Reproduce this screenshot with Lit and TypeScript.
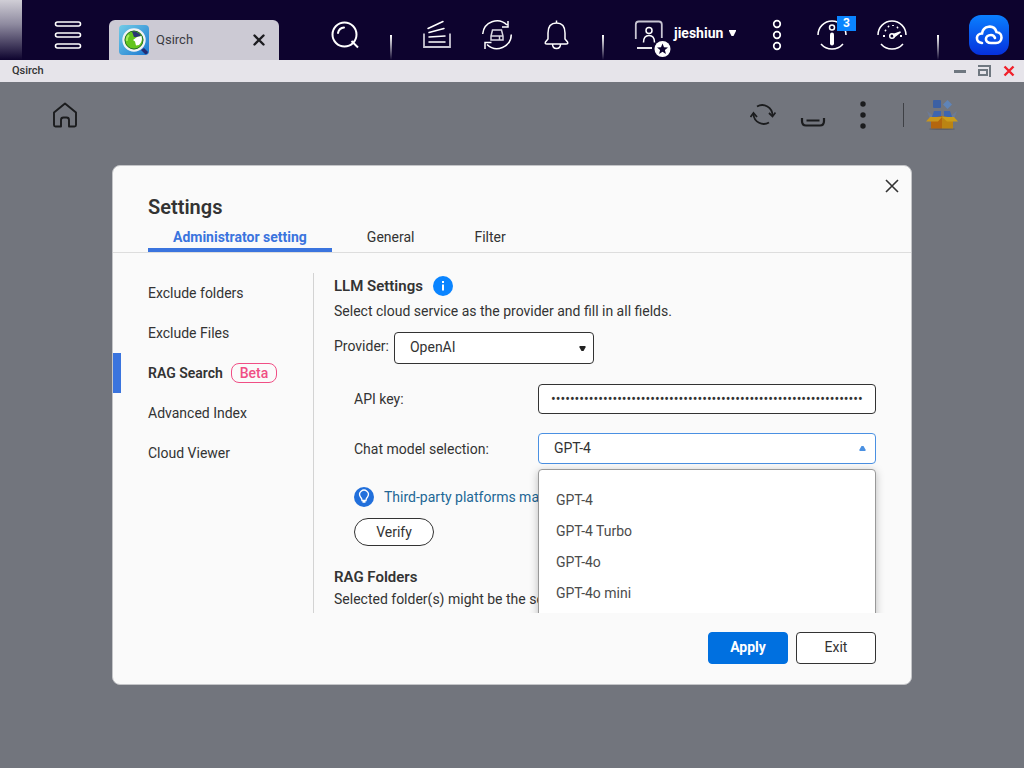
import { LitElement, html, css } from "lit";
import { customElement, state } from "lit/decorators.js";
import { classMap } from "lit/directives/class-map.js";

const reset = css`
  *, :host { box-sizing: border-box; }
  :host { font-family: Roboto, "Liberation Sans", sans-serif; font-size: 14px; line-height: 20px; color: #333; }
  button { font: inherit; color: inherit; background: none; border: 0; padding: 0; margin: 0; cursor: pointer; }
  svg { display: block; flex: none; }
`;

@customElement("desktop-bar")
class DesktopBar extends LitElement {
  static styles = [reset, css`
    :host { display: flex; height: 60px; background: #0d032e; color: #fff; }
    .edge { width: 22px; background: linear-gradient(#d0ced6, #8f8ba0 40%, #0d032e); }
    .menu { width: 87px; padding: 10px 0 0 4px; display: grid; place-items: center; }
    .tab { display: flex; align-items: center; width: 170px; height: 40px; margin-top: 20px; padding: 0 14px 0 10px; background: #cccad4; border-radius: 6px 6px 0 0; color: #3a3a42; }
    .tab span { flex: 1; padding-left: 7px; font-size: 13px; }
    .tools { display: flex; margin-left: auto; }
    .tool { width: 60px; padding-top: 10px; display: grid; place-items: center; position: relative; }
    .more { width: 50px; }
    .cloud { width: 70px; }
    .sep { width: 32px; display: flex; justify-content: center; padding-top: 35px; }
    .sep::before { content: ""; width: 2px; height: 25px; background: linear-gradient(#fff, #0d032e); }
    .user { width: 133px; display: flex; align-items: center; padding: 8px 0 0 15px; font-weight: 700; }
    .name { display: flex; align-items: center; gap: 6px; padding-bottom: 2px; }
    .count { position: absolute; top: 16px; right: 6px; width: 19px; height: 15px; background: #0a84ff; font-size: 12px; line-height: 15px; font-weight: 700; text-align: center; }
  `];

  render() {
    return html`
      <div class="edge"></div>
      <button class="menu" aria-label="Main menu">
        <svg width="28" height="28" fill="none" stroke="#fff" stroke-width="1.6"><rect x="1.500" y="1" width="25" height="4" rx="2"/><rect x="1.500" y="12" width="25" height="4" rx="2"/><rect x="1.500" y="23" width="25" height="4" rx="2"/></svg>
      </button>
      <div class="tab">
        <svg width="30" height="30">
          <defs><linearGradient id="sky" x1="0" y1="0" x2="1" y2="1"><stop stop-color="#72cce6"/><stop offset="1" stop-color="#1a78d2"/></linearGradient></defs>
          <rect width="30" height="30" rx="4" fill="url(#sky)"/>
          <path d="M22 25l3-2 4 4q-1 3-3 2z" fill="#252b70"/>
          <circle cx="15" cy="15" r="10.5" fill="#63c51d" stroke="#f2f2f4" stroke-width="2.4"/>
          <circle cx="15" cy="15" r="9" fill="none" stroke="#28702d" stroke-width="1"/>
          <path d="M15 12L13 6.500a9 9 0 0 1 9 4.500l-4 1z" fill="#2b3474"/>
          <path d="M14 15l4-3 4.500-1a9 9 0 0 1-2.500 9l-3 .5-1-4z" fill="#fff"/>
          <path d="M10 10q-3 3-2 6" stroke="#a4ea57" stroke-width="2" fill="none"/>
        </svg>
        <span>Qsirch</span>
        <button aria-label="Close Qsirch"><svg width="12" height="12" stroke="#1c1c20" stroke-width="2.4" stroke-linecap="round"><path d="M1.500 1.500l9 9m0-9l-9 9"/></svg></button>
      </div>
      <div class="tools">
        <button class="tool" aria-label="Search"><svg width="30" height="30" fill="none" stroke="#fff" stroke-width="2"><circle cx="14.500" cy="14.500" r="12"/><path d="M21.500 21l6.500 6.500"/><path d="M8 13q1-5 6-5.500" stroke-linecap="round"/></svg></button>
        <div class="sep"></div>
        <button class="tool" aria-label="Volumes"><svg width="30" height="30" fill="none" stroke="#fff" stroke-width="1.5"><path d="M2 13.500v13.500h26V13.500" stroke="#c8c5d2" stroke-width="1.800"/><path d="M7 22h16M7 17l16-1M7 12.500l15-4M6 8.500l15-7" stroke-linecap="round"/></svg></button>
        <button class="tool" aria-label="Devices"><svg width="32" height="32" fill="none" stroke="#fff" stroke-width="1.5"><path d="M1.700 15A14.300 14.300 0 0 1 26 6m1-4v6h-6M30.300 15.500A14.300 14.300 0 0 1 6 25.500M4 30v-6.500h6.500"/><path d="M11.500 11h9l1.500 6v4h-12v-4zM10 17h12M18.500 17v4" stroke="#d9d7e2"/></svg></button>
        <button class="tool" aria-label="Notifications"><svg width="28" height="32" fill="none" stroke="#fff" stroke-width="1.500"><path d="M13.500 1.500v2M5 14q0-10 8.500-10T22 14v6l2.500 3q1 2-1.500 2H4q-2.500 0-1.500-2L5 20zM9.500 25q0 4.500 4 4.500t4-4.500"/></svg></button>
        <div class="sep"></div>
        <button class="user">
          <svg width="40" height="46" viewBox="0 -7 40 46" fill="none" stroke="#fff" stroke-width="1.500"><path d="M1.800 21V6.500q0-3 3-3h20q3 0 3 3V20" stroke="#c8c5d2" stroke-width="1.800"/><circle cx="15" cy="12.500" r="3"/><path d="M9.500 24.500q0-7 5.500-7t5.500 7"/><path d="M3 30h15" stroke-width="1.800"/><circle cx="28.500" cy="31" r="8" fill="#fff" stroke="none"/><path d="M28.500 25.500l1.500 3.800 4 .2-3.100 2.600 1 3.900-3.400-2.200-3.400 2.200 1-3.900-3.100-2.600 4-.2z" fill="#0d032e" stroke="none"/></svg>
          <span class="name">jieshiun<svg width="7" height="6"><path d="M0 0h7v1L4.500 6h-2L0 1z" fill="#fff"/></svg></span>
        </button>
        <button class="tool more" aria-label="More"><svg width="10" height="32" fill="none" stroke="#fff" stroke-width="1.700"><circle cx="5" cy="5" r="3.300"/><circle cx="5" cy="16" r="3.300"/><circle cx="5" cy="27" r="3.300"/></svg></button>
        <button class="tool" aria-label="Information"><svg width="32" height="32" fill="none" stroke="#fff" stroke-width="1.500"><path d="M2 16A14 14 0 1 1 30 16M5 25a14.500 14.500 0 0 0 22 0"/><circle cx="16" cy="8.500" r="2.500"/><path d="M16 15.500v9" stroke-width="4" stroke-linecap="round"/></svg><span class="count">3</span></button>
        <button class="tool" aria-label="Dashboard"><svg width="32" height="32" fill="none" stroke="#fff" stroke-width="1.500"><path d="M2 16A14 14 0 1 1 30 16M5 25a14.500 14.500 0 0 0 22 0"/><path d="M7 17h2m0-6l1 1m2-5l1 1m4-2v1m5 1l-1 1m3 8h2" stroke-width="1.800"/><circle cx="16" cy="17" r="2.300"/><path d="M17.500 15.500l7-2.500-6 4.500z" fill="#fff"/></svg></button>
        <div class="sep"></div>
        <button class="tool cloud" aria-label="myQNAPcloud"><svg width="40" height="40">
          <defs><linearGradient id="deep" x1="0" y1="0" x2="0" y2="1"><stop stop-color="#0a80ff"/><stop offset="1" stop-color="#0630dc"/></linearGradient></defs>
          <rect width="40" height="40" rx="12" fill="url(#deep)"/>
          <path d="M13 28C6 27 6.500 18.500 13 18.500C14 10.500 25 9 27.500 17C34.500 17.500 34 28 27 28h-5c-7 0-6.500-8 0-8q3 0 4 3" fill="none" stroke="#fff" stroke-width="2.600" stroke-linecap="round"/></svg></button>
      </div>`;
  }
}

@customElement("window-title")
class WindowTitle extends LitElement {
  static styles = [reset, css`
    :host { display: flex; align-items: center; gap: 12px; height: 22px; padding: 0 9px 0 12px; background: #e6e4ea; font-size: 11px; }
    .title { flex: 1; font-weight: 500; }
  `];
  render() {
    return html`
      <span class="title">Qsirch</span>
      <button aria-label="Minimize"><svg width="12" height="12"><path d="M0 5h12v3H0z" fill="#6f7780"/></svg></button>
      <button aria-label="Restore"><svg width="13" height="12" fill="none" stroke="#6f7780" stroke-width="2"><path d="M0 1h12v11"/><rect x="1" y="5" width="8" height="5"/></svg></button>
      <button aria-label="Close"><svg width="12" height="12"><path d="M1.500 1.500l9 9m0-9l-9 9" stroke="#f0202a" stroke-width="2.400"/></svg></button>`;
  }
}

@customElement("app-toolbar")
class AppToolbar extends LitElement {
  static styles = [reset, css`
    :host { display: flex; align-items: center; height: 66px; padding: 0 58px 0 40px; }
    button { display: grid; place-items: center; width: 50px; height: 50px; }
    .home { margin-right: auto; }
    .sep { width: 30px; height: 24px; display: flex; justify-content: center; }
    .sep::before { content: ""; width: 1px; background: #3e4045; }
    .apps { width: 48px; }
  `];
  render() {
    return html`
      <button class="home" aria-label="Home"><svg width="26" height="28" fill="none" stroke="#1b1c1e" stroke-width="1.900" stroke-linejoin="round"><path d="M2 11.500l11-9 11 9V24q0 1.500-1.500 1.500H17V19q0-2.500-2.500-2.500h-3Q9 16.500 9 19v6.500H3.500Q2 25.500 2 24z"/></svg></button>
      <button aria-label="Refresh"><svg width="26" height="24" fill="none" stroke="#1b1c1e" stroke-width="1.800"><path d="M7 3.500A10.300 10.300 0 0 1 22.500 12.500M19 19.500A10.300 10.300 0 0 1 3.500 11.500"/><path d="M19 10l3.500 3.500L25.500 9.500M.5 14l3-4 3.500 4"/></svg></button>
      <button aria-label="Tasks"><svg width="26" height="24" fill="none" stroke="#1b1c1e" stroke-width="2.200"><path d="M2 15v3q0 4.500 4 4.500h14q4 0 4-4.500v-3M6.500 17.500h13"/></svg></button>
      <button aria-label="More options"><svg width="8" height="28" fill="#1b1c1e"><circle cx="4" cy="3" r="2.700"/><circle cx="4" cy="14" r="2.700"/><circle cx="4" cy="25" r="2.700"/></svg></button>
      <div class="sep"></div>
      <button class="apps" aria-label="Extensions"><svg width="32" height="30">
        <path d="M1 11l5 4v4H4zM31 11l-5 4v4h2z" fill="#6d7b96"/>
        <rect x="7" y="0" width="8" height="8" rx="1" fill="#3c60a4"/><path d="M21.500 0l4.500 4.500-4.500 4.500L17 4.500z" fill="#5f84b8"/>
        <path d="M8 11h7v6H6zM18 11h6l2 6h-8z" fill="#3d65b0"/>
        <ellipse cx="16" cy="29" rx="13" ry="1" fill="#5f6067"/>
        <path d="M5 18l11-2v12.500H5z" fill="#b4660f"/><path d="M16 16l11 2v10.500H16z" fill="#bb8413"/>
        <path d="M4 17h12l-4 4.500H0z" fill="#c7961d"/><path d="M16 17h12l4 4.500H21z" fill="#c99c1c"/>
      </svg></button>`;
  }
}

@customElement("settings-dialog")
class SettingsDialog extends LitElement {
  @state() private open = true;
  @state() private model = "GPT-4";

  private sections = ["Exclude folders", "Exclude Files", "RAG Search", "Advanced Index", "Cloud Viewer"];
  private models = ["GPT-4", "GPT-4 Turbo", "GPT-4o", "GPT-4o mini"];

  static styles = [reset, css`
    :host { display: block; width: min(800px, 100%); border: 1px solid #c4c5c8; border-radius: 8px; background: #fafafa; overflow: hidden; }
    .head { display: flex; justify-content: space-between; padding: 12px 11px 0 35px; }
    h1 { margin: 0; padding-top: 17px; font-size: 20px; line-height: 24px; font-weight: 600; }
    .close { width: 16px; height: 16px; }
    .tabs { display: flex; gap: 10px; padding: 4px 35px 0; border-bottom: 1px solid #ddd; }
    .tab { height: 29px; padding: 3px 25px 0; border-bottom: 4px solid transparent; }
    .tab.on { border-color: #3a74de; color: #3a74de; font-weight: 700; }
    .body { display: flex; height: 360px; padding-top: 20px; overflow: hidden; }
    nav { flex: 0 0 201px; display: flex; flex-direction: column; border-right: 1px solid #d3d3d3; }
    .nav { display: flex; align-items: center; gap: 8px; height: 40px; padding: 0 0 0 35px; }
    .nav.on { font-weight: 600; box-shadow: inset 8px 0 #3a74de; }
    .beta { height: 20px; padding: 0 8px; border: 1px solid #f04e85; border-radius: 8px; color: #f04e85; font-weight: 500; line-height: 18px; }
    .pane { flex: 1; min-width: 0; padding: 0 35px 0 20px; white-space: nowrap; }
    h2 { display: flex; align-items: center; gap: 10px; margin: 0; font-size: 15px; line-height: 20px; font-weight: 600; }
    h2.first { height: 26px; }
    p { margin: 2px 0 0; }
    .provider { display: flex; margin-top: 11px; gap: 5px; line-height: 28px; }
    .group { padding-left: 20px; }
    .row { display: flex; align-items: center; margin-top: 20px; }
    .row + .row { margin-top: 19px; }
    .row > label { flex: 0 0 184px; }
    .field { flex: 1; position: relative; }
    .pick { display: grid; align-items: center; }
    .pick > * { grid-area: 1 / 1; }
    .pick svg { justify-self: end; margin-right: 8px; pointer-events: none; }
    .pick.open svg { margin-right: 10px; }
    .short { width: 200px; }
    select, input { appearance: none; width: 100%; height: 32px; margin: 0; border: 1px solid #333; border-radius: 4px; background: #fff; font: inherit; color: #333; outline: 0; }
    select { padding: 0 15px 2px; line-height: 20px; }
    input { height: 30px; padding: 0 12px; }
    .open select { height: 31px; border-color: #4a90e2; }
    .list { position: absolute; z-index: 1; top: 36px; left: 0; right: 0; margin: 0; padding: 15px 0; list-style: none; background: #fff; border: 1px solid #999; border-radius: 4px; box-shadow: 0 2px 8px rgba(0, 0, 0, 0.25); color: #4c4c4c; }
    .list li { padding: 0 17px; line-height: 31px; cursor: pointer; }
    .tip { display: flex; align-items: center; gap: 10px; margin-top: 23px; color: #226795; }
    .verify { display: block; width: 80px; height: 28px; margin: 11px 0 21px; border: 1px solid #333; border-radius: 14px; background: #fff; }
    .foot { display: flex; justify-content: flex-end; gap: 8px; padding: 19px 35px 20px; }
    .foot button { width: 80px; height: 32px; padding-bottom: 2px; border: 1px solid #333; border-radius: 4px; background: #fff; }
    .foot .apply { border-color: #0070e0; background: #0070e0; color: #fff; font-weight: 700; }
  `];

  private choose(name: string) {
    this.model = name;
    this.open = false;
  }

  render() {
    return html`
      <div class="head">
        <h1>Settings</h1>
        <button class="close" aria-label="Close"><svg width="16" height="16"><path d="M2 2l12 12m0-12L2 14" stroke="#333" stroke-width="1.600"/></svg></button>
      </div>
      <div class="tabs" role="tablist">
        <button class="tab on" role="tab" aria-selected="true">Administrator setting</button>
        <button class="tab" role="tab">General</button>
        <button class="tab" role="tab">Filter</button>
      </div>
      <div class="body">
        <nav>
          ${this.sections.map((name) => html`
            <button class=${classMap({ nav: true, on: name === "RAG Search" })}>${name}${name === "RAG Search" ? html`<span class="beta">Beta</span>` : ""}</button>`)}
        </nav>
        <div class="pane">
          <h2 class="first">LLM Settings
            <svg width="20" height="20"><circle cx="10" cy="10" r="10" fill="#0a84ff"/><path d="M9 5h2v2H9zM9 8.500h2v6H9z" fill="#fff"/></svg>
          </h2>
          <p>Select cloud service as the provider and fill in all fields.</p>
          <div class="provider">
            <label for="provider">Provider:</label>
            <div class="pick short">
              <select id="provider"><option>OpenAI</option></select>
              <svg width="7" height="5"><path d="M.5 0h6v1.500L4.500 5h-2l-2-3.500z" fill="#222"/></svg>
            </div>
          </div>
          <div class="group">
            <div class="row">
              <label for="key">API key:</label>
              <div class="field pick"><input id="key" type="password" .value=${"k".repeat(66)} /></div>
            </div>
            <div class="row">
              <label for="model">Chat model selection:</label>
              <div class="field">
                <div class=${classMap({ pick: true, open: this.open })}>
                  <select id="model" .value=${this.model} @mousedown=${() => (this.open = !this.open)}>${this.models.map((m) => html`<option>${m}</option>`)}</select>
                  <svg width="7" height="5"><path d="M.5 5h6V3.500L4.500 0h-2l-2 3.500z" fill="#4a90e2"/></svg>
                </div>
                ${this.open ? html`<ul class="list" role="listbox">${this.models.map((m) => html`<li role="option" @click=${() => this.choose(m)}>${m}</li>`)}</ul>` : ""}
              </div>
            </div>
            <div class="tip">
              <svg width="20" height="20" fill="none" stroke="#fff" stroke-width="1.300"><circle cx="10" cy="10" r="10" fill="#216fdb" stroke="none"/><path d="M8 13.500Q8 11.500 6.500 10A4.300 4.300 0 1 1 13.500 10Q12 11.500 12 13.500zM8.500 15h3"/></svg>
              <span>Third-party platforms may</span>
            </div>
            <button class="verify">Verify</button>
          </div>
          <h2>RAG Folders</h2>
          <p>Selected folder(s) might be the so</p>
        </div>
      </div>
      <div class="foot">
        <button class="apply">Apply</button>
        <button>Exit</button>
      </div>`;
  }
}

@customElement("app-root")
class AppRoot extends LitElement {
  static styles = css`
    :host { display: flex; flex-direction: column; min-height: 100vh; }
    .window { flex: 1; position: relative; background: #72757d; }
    .overlay { position: absolute; inset: 0; display: flex; align-items: center; justify-content: center; }
  `;
  render() {
    return html`
      <desktop-bar></desktop-bar>
      <window-title></window-title>
      <main class="window">
        <app-toolbar></app-toolbar>
        <div class="overlay"><settings-dialog role="dialog" aria-label="Settings"></settings-dialog></div>
      </main>`;
  }
}
